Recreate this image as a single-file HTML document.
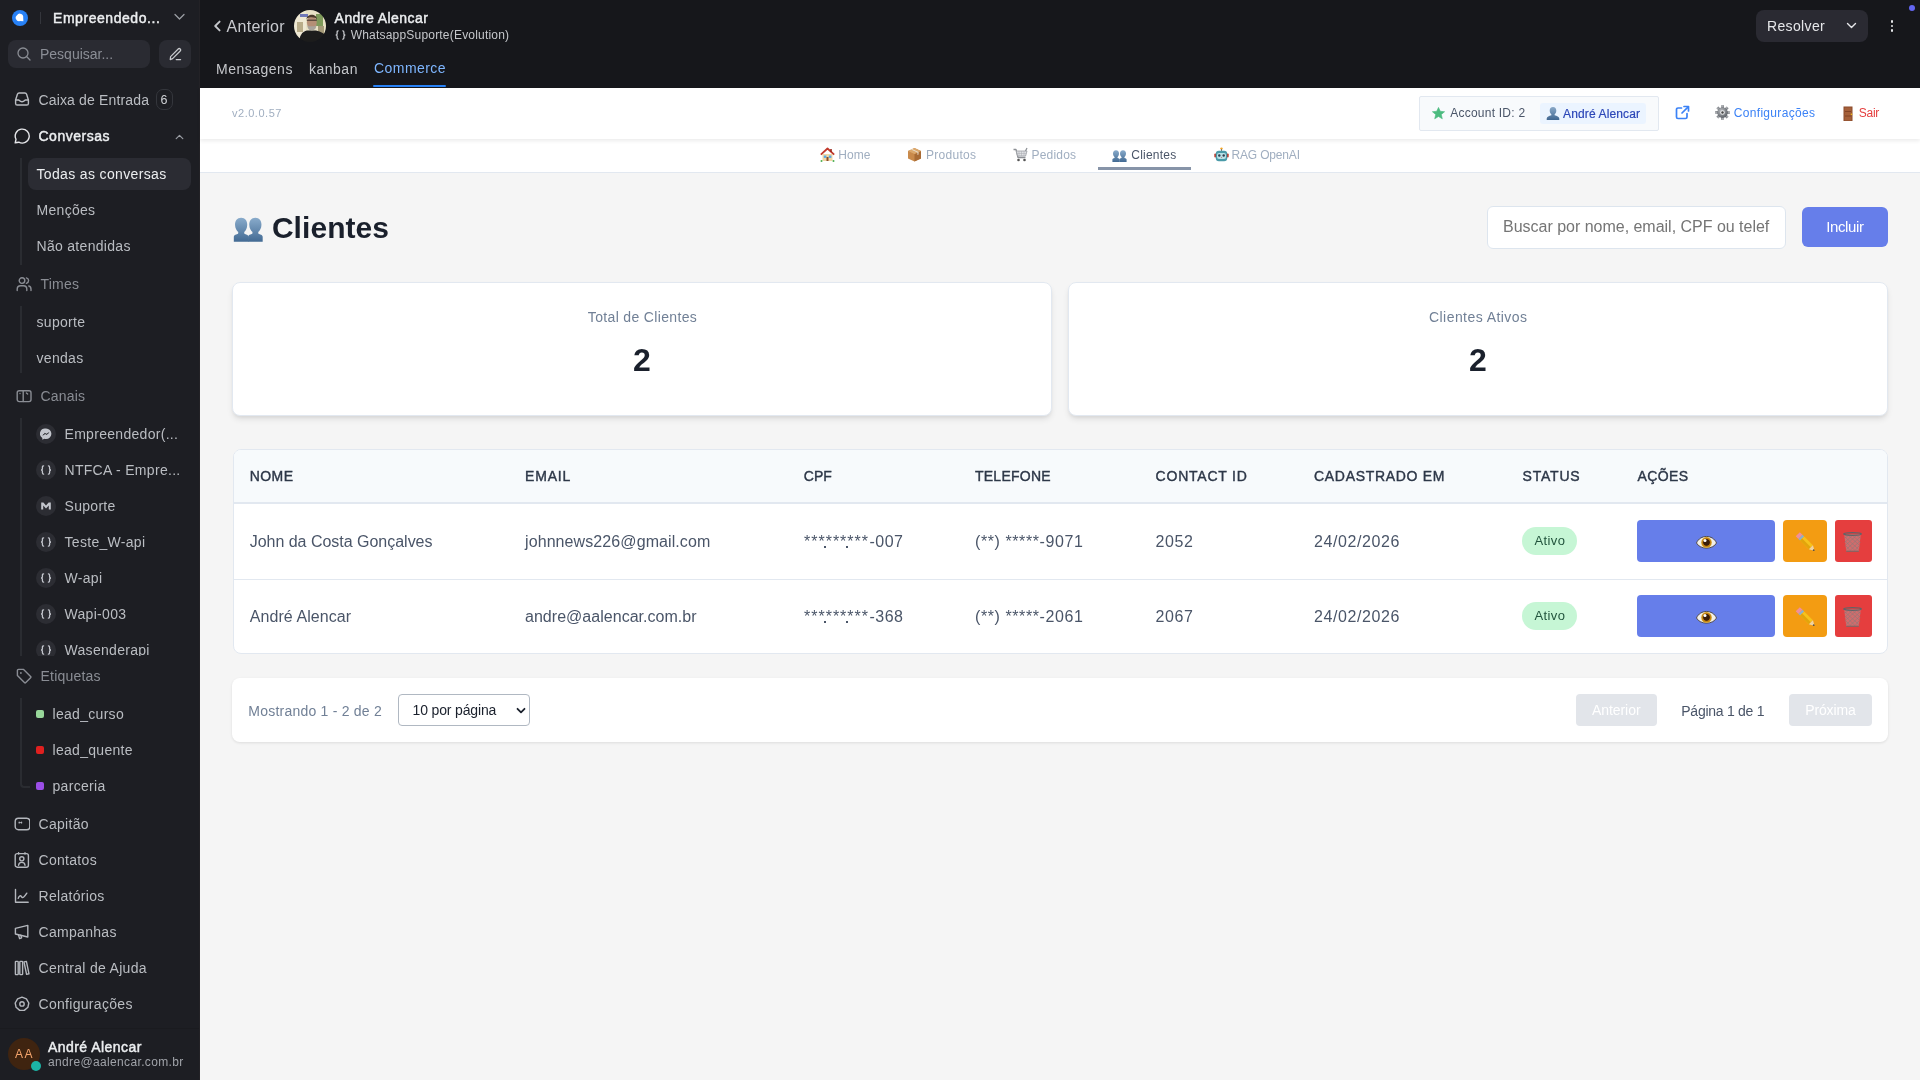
<!DOCTYPE html>
<html><head><meta charset="utf-8">
<style>
*{box-sizing:border-box;margin:0;padding:0}
html,body{width:1920px;height:1080px;overflow:hidden;font-family:"Liberation Sans",sans-serif;background:#f4f4f5;position:relative}
.abs{position:absolute}
.t{position:absolute;white-space:nowrap;line-height:1}
</style></head><body><div style="position:absolute;left:0;top:0;width:1920px;height:1080px;overflow:hidden;will-change:transform">

<div class="abs" style="left:0;top:0;width:200px;height:1080px;background:#1d1e23;border-right:1px solid #232226"></div>
<div class="abs" style="left:12px;top:10px;width:16px;height:16px;border-radius:50%;background:#2781f6"></div>
<svg class="abs" style="left:12px;top:10px;" width="16" height="16" viewBox="0 0 16 16" fill="none"><path d="M5 5.2 A3.4 3.4 0 0 1 11.2 7.6 L11.4 11.2 L7.9 11 A3.3 3.3 0 0 1 5 5.2Z" fill="#fff"/></svg>
<div class="abs" style="left:40px;top:12px;width:1px;height:12px;background:#34363c;"></div>
<div class="t" style="left:53px;top:11.16px;font-size:14px;color:#eceef0;font-weight:400;letter-spacing:0.55px;-webkit-text-stroke:0.45px #eceef0">Empreendedo...</div>
<svg class="abs" style="left:174px;top:13px;" width="11" height="8" viewBox="0 0 11 8" fill="none"><path d="M1 1.5 L5.5 6 L10 1.5" stroke="#9a9da3" stroke-width="1.3" stroke-linecap="round" stroke-linejoin="round"/></svg>
<div class="abs" style="left:8px;top:40px;width:142px;height:28px;border-radius:8px;background:#2a2b32"></div>
<svg class="abs" style="left:17px;top:47px;" width="14" height="14" viewBox="0 0 14 14" fill="none"><circle cx="6" cy="6" r="5" stroke="#8a8d94" stroke-width="1.3"/><path d="M9.8 9.8 L13 13" stroke="#8a8d94" stroke-width="1.3" stroke-linecap="round"/></svg>
<div class="t" style="left:40px;top:46.95px;font-size:14px;color:#8b8e96;font-weight:400;letter-spacing:0px;">Pesquisar...</div>
<div class="abs" style="left:159px;top:40px;width:32px;height:28px;border-radius:8px;background:#2a2b32"></div>
<svg class="abs" style="left:168px;top:47px;" width="14" height="14" viewBox="0 0 14 14" fill="none"><path d="M2.2 12.6 L2.6 9.6 L10.2 2 A1.4 1.4 0 0 1 12.2 4 L4.6 11.6 Z" stroke="#c9cbcf" stroke-width="1.2" stroke-linejoin="round"/><path d="M8.2 12.6 H12.6" stroke="#c9cbcf" stroke-width="1.2" stroke-linecap="round"/></svg>
<svg class="abs" style="left:14px;top:91px" width="16" height="16" viewBox="0 0 16 16" fill="none" stroke="#babdc2" stroke-width="1.4" stroke-linecap="round" stroke-linejoin="round"><path d="M1.6 9 L3.4 3.2 C3.7 2.4 4.3 2 5.1 2 H10.9 C11.7 2 12.3 2.4 12.6 3.2 L14.4 9 V12.4 C14.4 13.4 13.8 14 12.8 14 H3.2 C2.2 14 1.6 13.4 1.6 12.4 Z"/><path d="M1.6 9 H4.6 C5.4 9 5.6 10.8 8 10.8 C10.4 10.8 10.6 9 11.4 9 H14.4"/></svg>
<div class="t" style="left:38.5px;top:93.36px;font-size:14px;color:#babdc2;font-weight:400;letter-spacing:0.15px;">Caixa de Entrada</div>
<div class="abs" style="left:155.5px;top:89px;width:17px;height:21px;border-radius:7px;border:1px solid #34363c"></div>
<div class="t" style="left:160.5px;top:93.53px;font-size:12.5px;color:#d0d2d6;font-weight:400;letter-spacing:0px;">6</div>
<svg class="abs" style="left:13.8px;top:127.6px" width="16" height="16" viewBox="0 0 16 16" fill="none" stroke="#e6e7ea" stroke-width="1.4" stroke-linecap="round" stroke-linejoin="round"><path d="M4.8 14.2 A7 7 0 1 0 2 11.3 L1.2 14.8 Z"/></svg>
<div class="t" style="left:38.5px;top:129.35px;font-size:14px;color:#eceef0;font-weight:400;letter-spacing:0.5px;-webkit-text-stroke:0.45px #eceef0">Conversas</div>
<svg class="abs" style="left:174.5px;top:133.5px;" width="9" height="6" viewBox="0 0 9 6" fill="none"><path d="M1.2 4.6 L4.5 1.3 L7.8 4.6" stroke="#9a9da3" stroke-width="1.2" stroke-linecap="round" stroke-linejoin="round"/></svg>
<div class="abs" style="left:20px;top:158px;width:2px;height:107px;background:#2a2c31;"></div>
<div class="abs" style="left:28px;top:158px;width:163px;height:32px;border-radius:8px;background:#2b2c33"></div>
<div class="t" style="left:36.5px;top:167.35px;font-size:14px;color:#eceef0;font-weight:400;letter-spacing:0.35px;">Todas as conversas</div>
<div class="t" style="left:36.5px;top:203.35px;font-size:14px;color:#babdc2;font-weight:400;letter-spacing:0.3px;">Menções</div>
<div class="t" style="left:36.5px;top:239.35px;font-size:14px;color:#babdc2;font-weight:400;letter-spacing:0.3px;">Não atendidas</div>
<svg class="abs" style="left:16px;top:276px" width="16" height="16" viewBox="0 0 16 16" fill="none" stroke="#8a8d94" stroke-width="1.4" stroke-linecap="round" stroke-linejoin="round"><circle cx="6" cy="4.6" r="2.8"/><path d="M1.2 14.6 V13.2 C1.2 11 2.8 9.8 4.6 9.8 H7.4 C9.2 9.8 10.8 11 10.8 13.2 V14.6"/><path d="M10.4 1.9 C11.8 2.3 12.6 3.4 12.6 4.6 C12.6 5.8 11.8 6.9 10.4 7.3"/><path d="M12.8 10 C14.2 10.4 15 11.6 15 13.2 V14.6"/></svg>
<div class="t" style="left:40.5px;top:277.06px;font-size:14px;color:#8a8d94;font-weight:400;letter-spacing:0.2px;">Times</div>
<div class="abs" style="left:20px;top:306px;width:2px;height:67px;background:#2a2c31;"></div>
<div class="t" style="left:36.5px;top:315.36px;font-size:14px;color:#babdc2;font-weight:400;letter-spacing:0.3px;">suporte</div>
<div class="t" style="left:36.5px;top:351.36px;font-size:14px;color:#babdc2;font-weight:400;letter-spacing:0.3px;">vendas</div>
<svg class="abs" style="left:16px;top:389px" width="16" height="16" viewBox="0 0 16 16" fill="none" stroke="#8a8d94" stroke-width="1.4" stroke-linecap="round" stroke-linejoin="round"><rect x="1.2" y="1.8" width="13.8" height="10.8" rx="2"/><path d="M7.2 1.8 V12.6"/><path d="M4 4.4 V4.6"/><path d="M10.4 4 L11.6 5"/></svg>
<div class="t" style="left:40.5px;top:389.36px;font-size:14px;color:#8a8d94;font-weight:400;letter-spacing:0.2px;">Canais</div>
<div class="abs" style="left:20px;top:418px;width:2px;height:238px;background:#2a2c31;"></div>
<div class="abs" style="left:0;top:418px;width:200px;height:238px;overflow:hidden">
<div class="abs" style="left:36px;top:5.8px;width:20px;height:20px;border-radius:50%;background:#2c2d33"></div>
<svg class="abs" style="left:40px;top:9.8px" width="12" height="12" viewBox="0 0 12 12"><path d="M6 0.6 A5.4 5.2 0 0 1 6 11 A5.8 5.8 0 0 1 4.3 10.8 L2.4 11.8 L2.3 9.9 A5.1 5.1 0 0 1 6 0.6Z" fill="#c3c6cd"/><path d="M2.8 7.2 L4.8 5.3 L6.2 6.3 L8.8 4.6 L6.9 6.6 L5.5 5.6Z" fill="#2c2d33" stroke="#2c2d33" stroke-width="0.6"/></svg>
<div class="t" style="left:64.5px;top:9.16px;font-size:14px;color:#babdc2;letter-spacing:0.3px">Empreendedor(...</div>
<div class="abs" style="left:36px;top:41.8px;width:20px;height:20px;border-radius:50%;background:#2c2d33"></div>
<svg class="abs" style="left:40px;top:46.8px" width="12" height="10" viewBox="0 0 12 10" fill="none" stroke="#c3c6cd" stroke-width="1.3" stroke-linecap="round"><path d="M3.6 0.8 C2.6 0.8 2.4 1.3 2.4 2.4 V3.7 C2.4 4.5 2 5 1 5 C2 5 2.4 5.5 2.4 6.3 V7.6 C2.4 8.7 2.6 9.2 3.6 9.2"/><path d="M8.4 0.8 C9.4 0.8 9.6 1.3 9.6 2.4 V3.7 C9.6 4.5 10 5 11 5 C10 5 9.6 5.5 9.6 6.3 V7.6 C9.6 8.7 9.4 9.2 8.4 9.2"/></svg>
<div class="t" style="left:64.5px;top:45.16px;font-size:14px;color:#babdc2;letter-spacing:0.3px">NTFCA - Empre...</div>
<div class="abs" style="left:36px;top:77.8px;width:20px;height:20px;border-radius:50%;background:#2c2d33"></div>
<svg class="abs" style="left:40px;top:81.8px" width="12" height="12" viewBox="0 0 12 12"><path d="M1.2 2.5 H3.4 L6 5.6 L8.6 2.5 H10.8 V9.5 H8.8 V5.6 L6 8.6 L3.2 5.6 V9.5 H1.2Z" fill="#c3c6cd"/></svg>
<div class="t" style="left:64.5px;top:81.16px;font-size:14px;color:#babdc2;letter-spacing:0.3px">Suporte</div>
<div class="abs" style="left:36px;top:113.8px;width:20px;height:20px;border-radius:50%;background:#2c2d33"></div>
<svg class="abs" style="left:40px;top:118.8px" width="12" height="10" viewBox="0 0 12 10" fill="none" stroke="#c3c6cd" stroke-width="1.3" stroke-linecap="round"><path d="M3.6 0.8 C2.6 0.8 2.4 1.3 2.4 2.4 V3.7 C2.4 4.5 2 5 1 5 C2 5 2.4 5.5 2.4 6.3 V7.6 C2.4 8.7 2.6 9.2 3.6 9.2"/><path d="M8.4 0.8 C9.4 0.8 9.6 1.3 9.6 2.4 V3.7 C9.6 4.5 10 5 11 5 C10 5 9.6 5.5 9.6 6.3 V7.6 C9.6 8.7 9.4 9.2 8.4 9.2"/></svg>
<div class="t" style="left:64.5px;top:117.15px;font-size:14px;color:#babdc2;letter-spacing:0.3px">Teste_W-api</div>
<div class="abs" style="left:36px;top:149.8px;width:20px;height:20px;border-radius:50%;background:#2c2d33"></div>
<svg class="abs" style="left:40px;top:154.8px" width="12" height="10" viewBox="0 0 12 10" fill="none" stroke="#c3c6cd" stroke-width="1.3" stroke-linecap="round"><path d="M3.6 0.8 C2.6 0.8 2.4 1.3 2.4 2.4 V3.7 C2.4 4.5 2 5 1 5 C2 5 2.4 5.5 2.4 6.3 V7.6 C2.4 8.7 2.6 9.2 3.6 9.2"/><path d="M8.4 0.8 C9.4 0.8 9.6 1.3 9.6 2.4 V3.7 C9.6 4.5 10 5 11 5 C10 5 9.6 5.5 9.6 6.3 V7.6 C9.6 8.7 9.4 9.2 8.4 9.2"/></svg>
<div class="t" style="left:64.5px;top:153.15px;font-size:14px;color:#babdc2;letter-spacing:0.3px">W-api</div>
<div class="abs" style="left:36px;top:185.8px;width:20px;height:20px;border-radius:50%;background:#2c2d33"></div>
<svg class="abs" style="left:40px;top:190.8px" width="12" height="10" viewBox="0 0 12 10" fill="none" stroke="#c3c6cd" stroke-width="1.3" stroke-linecap="round"><path d="M3.6 0.8 C2.6 0.8 2.4 1.3 2.4 2.4 V3.7 C2.4 4.5 2 5 1 5 C2 5 2.4 5.5 2.4 6.3 V7.6 C2.4 8.7 2.6 9.2 3.6 9.2"/><path d="M8.4 0.8 C9.4 0.8 9.6 1.3 9.6 2.4 V3.7 C9.6 4.5 10 5 11 5 C10 5 9.6 5.5 9.6 6.3 V7.6 C9.6 8.7 9.4 9.2 8.4 9.2"/></svg>
<div class="t" style="left:64.5px;top:189.15px;font-size:14px;color:#babdc2;letter-spacing:0.3px">Wapi-003</div>
<div class="abs" style="left:36px;top:221.8px;width:20px;height:20px;border-radius:50%;background:#2c2d33"></div>
<svg class="abs" style="left:40px;top:226.8px" width="12" height="10" viewBox="0 0 12 10" fill="none" stroke="#c3c6cd" stroke-width="1.3" stroke-linecap="round"><path d="M3.6 0.8 C2.6 0.8 2.4 1.3 2.4 2.4 V3.7 C2.4 4.5 2 5 1 5 C2 5 2.4 5.5 2.4 6.3 V7.6 C2.4 8.7 2.6 9.2 3.6 9.2"/><path d="M8.4 0.8 C9.4 0.8 9.6 1.3 9.6 2.4 V3.7 C9.6 4.5 10 5 11 5 C10 5 9.6 5.5 9.6 6.3 V7.6 C9.6 8.7 9.4 9.2 8.4 9.2"/></svg>
<div class="t" style="left:64.5px;top:225.15px;font-size:14px;color:#babdc2;letter-spacing:0.3px">Wasenderapi</div>
</div>
<svg class="abs" style="left:16px;top:668px" width="16" height="16" viewBox="0 0 16 16" fill="none" stroke="#8a8d94" stroke-width="1.4" stroke-linecap="round" stroke-linejoin="round"><path d="M1.4 2.6 C1.4 1.9 1.9 1.4 2.6 1.4 H7.6 L14.6 8.4 C15 8.8 15 9.4 14.6 9.8 L9.8 14.6 C9.4 15 8.8 15 8.4 14.6 L1.4 7.6 Z"/><path d="M4.9 4.9 V5" stroke-width="1.8"/></svg>
<div class="t" style="left:40.5px;top:669.06px;font-size:14px;color:#8a8d94;font-weight:400;letter-spacing:0.2px;">Etiquetas</div>
<div class="abs" style="left:20px;top:698px;width:10px;height:90px;border-left:2px solid #2a2c31;border-bottom:2px solid #2a2c31;border-bottom-left-radius:4px"></div>
<div class="abs" style="left:36px;top:710px;width:8px;height:8px;background:#98d79a;border-radius:2px"></div>
<div class="t" style="left:52.5px;top:707.36px;font-size:14px;color:#babdc2;font-weight:400;letter-spacing:0.3px;">lead_curso</div>
<div class="abs" style="left:36px;top:746px;width:8px;height:8px;background:#e0201f;border-radius:2px"></div>
<div class="t" style="left:52.5px;top:743.36px;font-size:14px;color:#babdc2;font-weight:400;letter-spacing:0.3px;">lead_quente</div>
<div class="abs" style="left:36px;top:782px;width:8px;height:8px;background:#9b4ee6;border-radius:2px"></div>
<div class="t" style="left:52.5px;top:779.36px;font-size:14px;color:#babdc2;font-weight:400;letter-spacing:0.3px;">parceria</div>
<svg class="abs" style="left:13.5px;top:816px" width="16" height="16" viewBox="0 0 16 16" fill="none" stroke="#b4b7bd" stroke-width="1.4" stroke-linecap="round" stroke-linejoin="round"><rect x="1.2" y="2.2" width="14.6" height="11.6" rx="3.2"/><path d="M5.2 6.2 V6.9 M7.6 6.2 V6.9" stroke-width="1.2"/><path d="M5.2 6.6 H7.6" stroke-width="0.9"/></svg>
<svg class="abs" style="left:14px;top:852px" width="16" height="16" viewBox="0 0 16 16" fill="none" stroke="#b4b7bd" stroke-width="1.4" stroke-linecap="round" stroke-linejoin="round"><rect x="1.2" y="1.6" width="13.2" height="13.6" rx="2"/><path d="M4.6 0.8 V2 M11 0.8 V2"/><circle cx="7.8" cy="6.8" r="2.1"/><path d="M4.6 13.2 C4.8 11.2 6 10.4 7.8 10.4 C9.6 10.4 10.8 11.2 11 13.2"/></svg>
<svg class="abs" style="left:14px;top:888px" width="16" height="16" viewBox="0 0 16 16" fill="none" stroke="#b4b7bd" stroke-width="1.4" stroke-linecap="round" stroke-linejoin="round"><path d="M1.5 1.5 V14.2 H14.2"/><path d="M4.2 10.4 C5.2 7.2 6.6 7.2 7.6 8.8 C8.6 10.4 10 9.6 12.8 5.2"/></svg>
<svg class="abs" style="left:14px;top:924px" width="16" height="16" viewBox="0 0 16 16" fill="none" stroke="#b4b7bd" stroke-width="1.4" stroke-linecap="round" stroke-linejoin="round"><path d="M1.4 4.4 L13.8 1.4 V13 L1.4 10 Z"/><path d="M4.4 10.6 L5.6 14.6 L7.6 13.8 L6.8 11.2"/></svg>
<svg class="abs" style="left:14px;top:960px" width="16" height="16" viewBox="0 0 16 16" fill="none" stroke="#b4b7bd" stroke-width="1.4" stroke-linecap="round" stroke-linejoin="round"><rect x="1.4" y="1.4" width="2.8" height="13.2" rx="0.6"/><rect x="5.8" y="1.4" width="2.8" height="13.2" rx="0.6"/><path d="M10 2 L12.4 1.4 L15 13.8 L12.6 14.4 Z"/></svg>
<svg class="abs" style="left:14px;top:996px" width="16" height="16" viewBox="0 0 16 16" fill="none" stroke="#b4b7bd" stroke-width="1.4" stroke-linecap="round" stroke-linejoin="round"><path d="M8 1.2 L12.4 2.9 L14.8 7 L13.9 11.3 L10.3 14.4 H5.7 L2.1 11.3 L1.2 7 L3.6 2.9 Z"/><circle cx="8" cy="7.9" r="2.2"/></svg>
<div class="t" style="left:38.5px;top:816.86px;font-size:14px;color:#babdc2;font-weight:400;letter-spacing:0.3px;">Capitão</div>
<div class="t" style="left:38.5px;top:852.86px;font-size:14px;color:#babdc2;font-weight:400;letter-spacing:0.3px;">Contatos</div>
<div class="t" style="left:38.5px;top:888.86px;font-size:14px;color:#babdc2;font-weight:400;letter-spacing:0.3px;">Relatórios</div>
<div class="t" style="left:38.5px;top:924.86px;font-size:14px;color:#babdc2;font-weight:400;letter-spacing:0.3px;">Campanhas</div>
<div class="t" style="left:38.5px;top:960.86px;font-size:14px;color:#babdc2;font-weight:400;letter-spacing:0.3px;">Central de Ajuda</div>
<div class="t" style="left:38.5px;top:996.86px;font-size:14px;color:#babdc2;font-weight:400;letter-spacing:0.3px;">Configurações</div>
<div class="abs" style="left:0px;top:1028px;width:199px;height:1px;background:#1a1b1f;"></div>
<div class="abs" style="left:8px;top:1038px;width:32px;height:32px;border-radius:50%;background:#3f2410"></div>
<div class="t" style="left:15px;top:1047.89px;font-size:12px;color:#f4a46c;font-weight:400;letter-spacing:1.4px;">AA</div>
<div class="abs" style="left:30.5px;top:1060.5px;width:10px;height:10px;border-radius:50%;background:#1cb5a5"></div>
<div class="t" style="left:48px;top:1039.76px;font-size:14px;color:#eceef0;font-weight:400;letter-spacing:0.45px;-webkit-text-stroke:0.45px #eceef0">André Alencar</div>
<div class="t" style="left:48px;top:1056.09px;font-size:12px;color:#a0a3a9;font-weight:400;letter-spacing:0.35px;">andre@aalencar.com.br</div>
<div class="abs" style="left:200px;top:0;width:1720px;height:88px;background:#16171b"></div>
<svg class="abs" style="left:213px;top:20px;" width="9" height="12" viewBox="0 0 9 12" fill="none"><path d="M6.6 1.6 L2.2 6 L6.6 10.4" stroke="#c5c7cb" stroke-width="1.9" stroke-linecap="round" stroke-linejoin="round"/></svg>
<div class="t" style="left:226.5px;top:18.92px;font-size:16px;color:#c8cacf;font-weight:400;letter-spacing:0.3px;">Anterior</div>
<svg class="abs" style="left:294px;top:9.8px;" width="32" height="32" viewBox="0 0 32 32" fill="none"><defs><clipPath id="av"><circle cx="16" cy="16" r="16"/></clipPath>
<filter id="blr" x="-10%" y="-10%" width="120%" height="120%"><feGaussianBlur stdDeviation="0.7"/></filter></defs>
<g clip-path="url(#av)"><g filter="url(#blr)"><rect width="32" height="32" fill="#e9e2c6"/>
<rect x="0" y="0" width="12" height="32" fill="#efe9d4"/>
<rect x="6" y="4" width="8" height="3" fill="#6f78b8"/>
<rect x="3" y="12" width="6" height="10" fill="#b9ad8a"/>
<rect x="22" y="4" width="7" height="12" fill="#7e9a5a"/>
<rect x="24" y="16" width="6" height="10" fill="#a59a78"/>
<path d="M5 34 C5 26 8 21.5 13 20.5 L22 20.5 C27 21.5 31 24 33 27 V34Z" fill="#1c1c1f"/>
<ellipse cx="17.8" cy="12.4" rx="4.9" ry="6.6" fill="#b58f76"/>
<path d="M12.6 9.2 C12.4 3.6 22.8 2.6 23 9.4 C21.8 6.6 14 6.4 12.6 9.2Z" fill="#4b3a2c"/>
<path d="M13.2 15 C13.6 19.5 16 20.4 17.8 20.4 C19.8 20.4 22.2 19.4 22.4 15 C21 17 19.5 16.2 17.8 16.2 C16 16.2 14.6 17 13.2 15Z" fill="#a9a49c"/>
<path d="M12.8 10.2 H22.8" stroke="#3a302a" stroke-width="1"/>
</g></g></svg>
<div class="t" style="left:334.6px;top:11.36px;font-size:14px;color:#eceef0;font-weight:400;letter-spacing:0.45px;-webkit-text-stroke:0.45px #eceef0">Andre Alencar</div>
<svg class="abs" style="left:334.5px;top:30px" width="11" height="10" viewBox="0 0 11 10" fill="none" stroke="#c5c7cb" stroke-width="1.3" stroke-linecap="round"><path d="M3.2 0.8 C2.3 0.8 2.1 1.3 2.1 2.4 V3.7 C2.1 4.5 1.7 5 0.7 5 C1.7 5 2.1 5.5 2.1 6.3 V7.6 C2.1 8.7 2.3 9.2 3.2 9.2"/><path d="M7.8 0.8 C8.7 0.8 8.9 1.3 8.9 2.4 V3.7 C8.9 4.5 9.3 5 10.3 5 C9.3 5 8.9 5.5 8.9 6.3 V7.6 C8.9 8.7 8.7 9.2 7.8 9.2"/></svg>
<div class="t" style="left:350.7px;top:28.79px;font-size:12px;color:#c5c7cb;font-weight:400;letter-spacing:0.2px;">WhatsappSuporte(Evolution)</div>
<div class="t" style="left:216px;top:61.65px;font-size:14px;color:#c5c7cb;font-weight:400;letter-spacing:0.5px;">Mensagens</div>
<div class="t" style="left:309px;top:61.65px;font-size:14px;color:#c5c7cb;font-weight:400;letter-spacing:0.5px;">kanban</div>
<div class="t" style="left:374px;top:60.85px;font-size:14px;color:#7eb6ff;font-weight:400;letter-spacing:0.45px;">Commerce</div>
<div class="abs" style="left:373px;top:85px;width:73px;height:2px;background:#2781f6;border-radius:1px"></div>
<div class="abs" style="left:1756px;top:10px;width:112px;height:32px;border-radius:8px;background:#2a2a32"></div>
<div class="t" style="left:1767px;top:18.96px;font-size:14px;color:#e6e7ea;font-weight:400;letter-spacing:0.35px;">Resolver</div>
<svg class="abs" style="left:1846px;top:22px;" width="11" height="8" viewBox="0 0 11 8" fill="none"><path d="M1.5 1.5 L5.5 5.5 L9.5 1.5" stroke="#e6e7ea" stroke-width="1.4" stroke-linecap="round" stroke-linejoin="round"/></svg>
<div class="abs" style="left:1890.5px;top:20px;width:2.6px;height:2.6px;border-radius:50%;background:#e6e7ea"></div>
<div class="abs" style="left:1890.5px;top:24.5px;width:2.6px;height:2.6px;border-radius:50%;background:#e6e7ea"></div>
<div class="abs" style="left:1890.5px;top:29px;width:2.6px;height:2.6px;border-radius:50%;background:#e6e7ea"></div>
<div class="abs" style="left:1909px;top:5px;width:6px;height:6px;border-radius:50%;background:#6366f1"></div>
<div class="abs" style="left:200px;top:88px;width:1720px;height:992px;background:#f5f5f5"></div>
<div class="abs" style="left:200px;top:88px;width:1720px;height:51px;background:#fff;box-shadow:0 2px 4px rgba(0,0,0,0.08);z-index:2"></div>
<div class="abs" style="left:200px;top:139px;width:1720px;height:34px;background:#fff;border-bottom:1px solid #e2e8f0"></div>
<div style="position:absolute;left:0;top:0;width:1920px;height:1080px;z-index:3">
<div class="t" style="left:232px;top:107.91px;font-size:11px;color:#a0aec0;font-weight:400;letter-spacing:0.518px;">v2.0.0.57</div>
<div class="abs" style="left:1419px;top:96px;width:240px;height:35px;background:#f8fafc;border:1px solid #e2e8f0;border-radius:2px"></div>
<svg class="abs" style="left:1431.5px;top:106.8px;" width="13" height="13" viewBox="0 0 13 13" fill="none"><path d="M6.5 0.4 L8.3 4.3 L12.6 4.7 L9.3 7.5 L10.3 11.8 L6.5 9.5 L2.7 11.8 L3.7 7.5 L0.4 4.7 L4.7 4.3Z" fill="#4cbb7f" stroke="#4cbb7f" stroke-width="0.6" stroke-linejoin="round"/></svg>
<div class="t" style="left:1450.2px;top:106.59px;font-size:12px;color:#4a5568;font-weight:400;letter-spacing:0.239px;">Account ID: 2</div>
<div class="abs" style="left:1540px;top:103px;width:106px;height:21px;background:#ebf4ff;border-radius:3px"></div>
<svg class="abs" style="left:1546px;top:106px;" width="14" height="14" viewBox="0 0 14 14" fill="none"><defs><linearGradient id="bu" x1="0" y1="0" x2="0" y2="1"><stop offset="0" stop-color="#8aa9c8"/><stop offset="1" stop-color="#3f6690"/></linearGradient></defs><path d="M7 1 C9.2 1 10.3 2.6 10.3 4.6 C10.3 6.6 9.3 8 8.6 8.5 L8.6 9.3 C11 9.8 13 10.8 13.3 12.5 L13.3 14 H0.7 V12.5 C1 10.8 3 9.8 5.4 9.3 L5.4 8.5 C4.7 8 3.7 6.6 3.7 4.6 C3.7 2.6 4.8 1 7 1Z" fill="url(#bu)"/></svg>
<div class="t" style="left:1563px;top:107.59px;font-size:12px;color:#2c47b8;font-weight:400;letter-spacing:0.135px;-webkit-text-stroke:0.2px #2c47b8">André Alencar</div>
<svg class="abs" style="left:1675px;top:104.5px;" width="15" height="15" viewBox="0 0 15 15" fill="none"><path d="M6.5 3 H3 A1.5 1.5 0 0 0 1.5 4.5 V12 A1.5 1.5 0 0 0 3 13.5 H10.5 A1.5 1.5 0 0 0 12 12 V8.5" stroke="#3b82f6" stroke-width="1.7" stroke-linecap="round"/><path d="M9 1.5 H13.5 V6" stroke="#3b82f6" stroke-width="1.7" stroke-linecap="round" stroke-linejoin="round"/><path d="M13.2 1.8 L7 8" stroke="#3b82f6" stroke-width="1.7" stroke-linecap="round"/></svg>
<svg class="abs" style="left:1715px;top:105px;" width="15" height="15" viewBox="0 0 15 15" fill="none"><defs><radialGradient id="gr" cx="0.4" cy="0.35" r="0.7"><stop offset="0" stop-color="#b9bcc0"/><stop offset="1" stop-color="#5c6066"/></radialGradient></defs><g transform="translate(7.5 7.5)"><g fill="url(#gr)"><rect x="-1.3" y="-7.3" width="2.6" height="3" transform="rotate(0)"/><rect x="-1.3" y="-7.3" width="2.6" height="3" transform="rotate(45)"/><rect x="-1.3" y="-7.3" width="2.6" height="3" transform="rotate(90)"/><rect x="-1.3" y="-7.3" width="2.6" height="3" transform="rotate(135)"/><rect x="-1.3" y="-7.3" width="2.6" height="3" transform="rotate(180)"/><rect x="-1.3" y="-7.3" width="2.6" height="3" transform="rotate(225)"/><rect x="-1.3" y="-7.3" width="2.6" height="3" transform="rotate(270)"/><rect x="-1.3" y="-7.3" width="2.6" height="3" transform="rotate(315)"/><circle r="5.2"/></g><circle r="2.3" fill="#e8e9ea"/><circle r="1.2" fill="#444"/></g></svg>
<div class="t" style="left:1733.75px;top:106.84px;font-size:12px;color:#3b82f6;font-weight:400;letter-spacing:0.322px;">Configurações</div>
<svg class="abs" style="left:1843px;top:106px;" width="10" height="15" viewBox="0 0 10 15" fill="none"><rect x="0.5" y="0.5" width="9" height="14.5" fill="#8b4a2b"/><rect x="1.5" y="1.5" width="7" height="13" fill="#a5603a"/><path d="M2 5.5 H8 M2 10 H8" stroke="#7a3e22" stroke-width="0.8"/><circle cx="8.5" cy="8.2" r="0.8" fill="#f5c518"/></svg>
<div class="t" style="left:1858.75px;top:107.09px;font-size:12px;color:#e53e3e;font-weight:400;letter-spacing:-0.247px;">Sair</div>
<svg class="abs" style="left:820px;top:147px;" width="15" height="15" viewBox="0 0 15 15" fill="none"><path d="M2.5 7 V14 H12.5 V7" fill="#f2d8a6"/><path d="M0.8 7.6 L7.5 1.5 L14.2 7.6" stroke="#c1392b" stroke-width="1.8" fill="none" stroke-linejoin="round"/><rect x="10.2" y="2" width="1.6" height="3" fill="#9b2a1f"/><rect x="3.8" y="8.5" width="2.6" height="2.4" fill="#5aa9e6"/><rect x="8.8" y="8.5" width="2.6" height="2.4" fill="#5aa9e6"/><rect x="6.5" y="10" width="2" height="4" fill="#8a4b2a"/><circle cx="1.5" cy="14" r="1" fill="#4caf50"/><circle cx="13.5" cy="14" r="1" fill="#4caf50"/></svg>
<div class="t" style="left:838.3px;top:148.79px;font-size:12px;color:#a0aec0;font-weight:400;letter-spacing:0.03px;">Home</div>
<svg class="abs" style="left:907px;top:147px;" width="15" height="15" viewBox="0 0 15 15" fill="none"><path d="M7.5 1 L14 4 V11.5 L7.5 14.5 L1 11.5 V4Z" fill="#c98a4b"/><path d="M7.5 7 L14 4 V11.5 L7.5 14.5Z" fill="#a86b35"/><path d="M1 4 L7.5 7 L14 4 L7.5 1Z" fill="#dba86c"/><path d="M4 2.5 L10.5 5.5 L10.5 8 L11.5 7.5 L11.5 5 L5 2Z" fill="#e9dfd0"/></svg>
<div class="t" style="left:926px;top:148.79px;font-size:12px;color:#a0aec0;font-weight:400;letter-spacing:0.281px;">Produtos</div>
<svg class="abs" style="left:1013px;top:147px;" width="15" height="15" viewBox="0 0 15 15" fill="none"><path d="M0.5 2.5 H3 L5 10.5 H12.5" stroke="#8c8f94" stroke-width="1.3" fill="none" stroke-linejoin="round"/><path d="M3.3 4 H14 L12.6 9 H4.6Z" fill="#dfe1e4" stroke="#9a9da2" stroke-width="0.8"/><path d="M6 4 V9 M8.5 4 V9 M11 4 V9 M4 6.5 H13.3" stroke="#a8abb0" stroke-width="0.5"/><path d="M14 1 L12.5 4" stroke="#8c8f94" stroke-width="1.2"/><circle cx="5.5" cy="13" r="1.3" fill="#555"/><circle cx="11.5" cy="13" r="1.3" fill="#555"/></svg>
<div class="t" style="left:1031.5px;top:148.79px;font-size:12px;color:#a0aec0;font-weight:400;letter-spacing:0.189px;">Pedidos</div>
<svg class="abs" style="left:1112px;top:149.7px;" width="15" height="12" viewBox="0 0 15 12" fill="none"><defs><linearGradient id="bgn" x1="0" y1="0" x2="0" y2="1"><stop offset="0" stop-color="#89abcb"/><stop offset="1" stop-color="#426a93"/></linearGradient></defs><g fill="url(#bgn)"><path d="M4 0.2 C6 0.2 7 1.7 7 3.6 C7 5.3 6.2 6.6 5.5 7.2 L5.6 8 C7 8.4 7.6 8.9 7.6 9.5 V12 H0.4 V9.5 C0.4 8.9 1 8.4 2.5 8 L2.6 7.2 C1.9 6.6 1 5.3 1 3.6 C1 1.7 2 0.2 4 0.2Z"/><path d="M11 0.2 C13 0.2 14 1.7 14 3.6 C14 5.3 13.1 6.6 12.4 7.2 L12.5 8 C14 8.4 14.6 8.9 14.6 9.5 V12 H7.4 V9.5 C7.4 8.9 8 8.4 9.5 8 L9.6 7.2 C8.9 6.6 8 5.3 8 3.6 C8 1.7 9 0.2 11 0.2Z"/></g></svg>
<div class="t" style="left:1131.25px;top:148.69px;font-size:12px;color:#4a5568;font-weight:400;letter-spacing:0.235px;">Clientes</div>
<div class="abs" style="left:1098px;top:167px;width:93px;height:2.6px;background:#8794a8;"></div>
<svg class="abs" style="left:1213.5px;top:147px;" width="15" height="15" viewBox="0 0 15 15" fill="none"><circle cx="7.5" cy="1.6" r="1.2" fill="#f5a623"/><rect x="7" y="2" width="1" height="2" fill="#777"/><rect x="0.3" y="6.5" width="2" height="4" rx="1" fill="#c0392b"/><rect x="12.7" y="6.5" width="2" height="4" rx="1" fill="#c0392b"/><rect x="1.8" y="3.8" width="11.4" height="10.4" rx="3" fill="#4a9aa8"/><rect x="3" y="6" width="9" height="6" rx="2" fill="#b8e0e6"/><circle cx="5.3" cy="8.5" r="1.2" fill="#2c3e50"/><circle cx="9.7" cy="8.5" r="1.2" fill="#2c3e50"/><path d="M7 10 L8 10 L7.5 11Z" fill="#c0392b"/></svg>
<div class="t" style="left:1231.5px;top:148.79px;font-size:12px;color:#a0aec0;font-weight:400;letter-spacing:-0.17px;">RAG OpenAI</div>
<svg class="abs" style="left:233px;top:217.3px;" width="30.5" height="25.3" viewBox="0 0 15 12" fill="none"><defs><linearGradient id="bgt" x1="0" y1="0" x2="0" y2="1"><stop offset="0" stop-color="#89abcb"/><stop offset="1" stop-color="#426a93"/></linearGradient></defs><g fill="url(#bgt)"><path d="M4 0.2 C6 0.2 7 1.7 7 3.6 C7 5.3 6.2 6.6 5.5 7.2 L5.6 8 C7 8.4 7.6 8.9 7.6 9.5 V12 H0.4 V9.5 C0.4 8.9 1 8.4 2.5 8 L2.6 7.2 C1.9 6.6 1 5.3 1 3.6 C1 1.7 2 0.2 4 0.2Z"/><path d="M11 0.2 C13 0.2 14 1.7 14 3.6 C14 5.3 13.1 6.6 12.4 7.2 L12.5 8 C14 8.4 14.6 8.9 14.6 9.5 V12 H7.4 V9.5 C7.4 8.9 8 8.4 9.5 8 L9.6 7.2 C8.9 6.6 8 5.3 8 3.6 C8 1.7 9 0.2 11 0.2Z"/></g></svg>
<div class="t" style="left:271.9px;top:212.88px;font-size:30px;color:#1a202c;font-weight:700;letter-spacing:0.056px;">Clientes</div>
<div class="abs" style="left:1486.5px;top:205.5px;width:299px;height:43px;background:#fff;border:1px solid #dde5ee;border-radius:6px"></div>
<div class="t" style="left:1503px;top:219.12px;font-size:16px;color:#757575;font-weight:400;letter-spacing:-0.014px;">Buscar por nome, email, CPF ou telef</div>
<div class="abs" style="left:1802px;top:207px;width:86px;height:40px;background:#667eea;border-radius:6px"></div>
<div class="t" style="left:1826.2px;top:219.24px;font-size:15px;color:#ffffff;font-weight:400;letter-spacing:-0.369px;">Incluir</div>
<div class="abs" style="left:232px;top:281.5px;width:820px;height:134px;background:#fff;border:1px solid #e2e8f0;border-radius:8px;box-shadow:0 4px 6px -1px rgba(0,0,0,0.1),0 2px 4px -1px rgba(0,0,0,0.06)"></div>
<div class="abs" style="left:1068px;top:281.5px;width:820px;height:134px;background:#fff;border:1px solid #e2e8f0;border-radius:8px;box-shadow:0 4px 6px -1px rgba(0,0,0,0.1),0 2px 4px -1px rgba(0,0,0,0.06)"></div>
<div class="t" style="left:587.8px;top:310.06px;font-size:14px;color:#718096;font-weight:400;letter-spacing:0.343px;">Total de Clientes</div>
<div class="t" style="left:632.9px;top:343.84px;font-size:32px;color:#1a202c;font-weight:700;letter-spacing:0px;">2</div>
<div class="t" style="left:1429px;top:310.06px;font-size:14px;color:#718096;font-weight:400;letter-spacing:0.441px;">Clientes Ativos</div>
<div class="t" style="left:1469px;top:343.84px;font-size:32px;color:#1a202c;font-weight:700;letter-spacing:0px;">2</div>
<div class="abs" style="left:232.5px;top:448.5px;width:1655px;height:205px;background:#fff;border:1px solid #e2e8f0;border-radius:8px;overflow:hidden"><div class="abs" style="left:0;top:0;width:1655px;height:54px;background:#f7fafc;border-bottom:2px solid #e2e8f0"></div><div class="abs" style="left:0;top:129px;width:1655px;height:1px;background:#e2e8f0"></div></div>
<div class="t" style="left:249.7px;top:469.25px;font-size:14px;color:#2d3748;font-weight:400;letter-spacing:0.433px;-webkit-text-stroke:0.4px #2d3748">NOME</div>
<div class="t" style="left:525px;top:469.25px;font-size:14px;color:#2d3748;font-weight:400;letter-spacing:0.821px;-webkit-text-stroke:0.4px #2d3748">EMAIL</div>
<div class="t" style="left:803.75px;top:469.25px;font-size:14px;color:#2d3748;font-weight:400;letter-spacing:0.049px;-webkit-text-stroke:0.4px #2d3748">CPF</div>
<div class="t" style="left:975px;top:469.25px;font-size:14px;color:#2d3748;font-weight:400;letter-spacing:0.242px;-webkit-text-stroke:0.4px #2d3748">TELEFONE</div>
<div class="t" style="left:1155.6px;top:469.25px;font-size:14px;color:#2d3748;font-weight:400;letter-spacing:0.782px;-webkit-text-stroke:0.4px #2d3748">CONTACT ID</div>
<div class="t" style="left:1314px;top:469.25px;font-size:14px;color:#2d3748;font-weight:400;letter-spacing:0.689px;-webkit-text-stroke:0.4px #2d3748">CADASTRADO EM</div>
<div class="t" style="left:1522.5px;top:469.25px;font-size:14px;color:#2d3748;font-weight:400;letter-spacing:0.81px;-webkit-text-stroke:0.4px #2d3748">STATUS</div>
<div class="t" style="left:1637.5px;top:469.25px;font-size:14px;color:#2d3748;font-weight:400;letter-spacing:0.371px;-webkit-text-stroke:0.4px #2d3748">AÇÕES</div>
<div class="t" style="left:249.7px;top:534.02px;font-size:16px;color:#4a5568;font-weight:400;letter-spacing:-0.019px;">John da Costa Gonçalves</div>
<div class="t" style="left:525px;top:534.02px;font-size:16px;color:#4a5568;font-weight:400;letter-spacing:0.092px;">johnnews226@gmail.com</div>
<div class="t" style="left:804px;top:534.02px;font-size:16px;color:#4a5568;font-weight:400;letter-spacing:0.995px;">*********</div>
<div class="abs" style="left:824.3px;top:546.1999999999999px;width:2.2px;height:2.2px;background:#4a5568;"></div>
<div class="abs" style="left:846.2px;top:546.1999999999999px;width:2.2px;height:2.2px;background:#4a5568;"></div>
<div class="t" style="left:869.4px;top:534.02px;font-size:16px;color:#4a5568;font-weight:400;letter-spacing:0.525px;">-007</div>
<div class="t" style="left:975px;top:534.02px;font-size:16px;color:#4a5568;font-weight:400;letter-spacing:0.585px;">(**) *****-9071</div>
<div class="t" style="left:1155.6px;top:534.02px;font-size:16px;color:#4a5568;font-weight:400;letter-spacing:0.535px;">2052</div>
<div class="t" style="left:1314px;top:534.02px;font-size:16px;color:#4a5568;font-weight:400;letter-spacing:0.591px;">24/02/2026</div>
<div class="abs" style="left:1522px;top:527.1px;width:55px;height:27.7px;background:#c6f6d5;border-radius:14px"></div>
<div class="t" style="left:1534.4px;top:534.27px;font-size:13px;color:#22543d;font-weight:400;letter-spacing:0.425px;">Ativo</div>
<div class="abs" style="left:1637px;top:520.2px;width:138px;height:41.7px;background:#667eea;border-radius:4px"></div>
<div class="abs" style="left:1783px;top:520.2px;width:44px;height:41.7px;background:#f39c12;border-radius:4px"></div>
<div class="abs" style="left:1835px;top:520.2px;width:36.5px;height:41.7px;background:#e53e3e;border-radius:3px"></div>
<svg class="abs" style="left:1695.5px;top:533.7px;" width="21" height="16" viewBox="0 0 21 16" fill="none"><defs><radialGradient id="ir0" cx="0.5" cy="0.5" r="0.5"><stop offset="0.55" stop-color="#3b1d08"/><stop offset="0.7" stop-color="#b8760f"/><stop offset="1" stop-color="#d9a21c"/></radialGradient></defs><path d="M0.5 9 C4 0.3 17 0.3 20.5 9 C17 15.8 4 15.8 0.5 9Z" fill="#f2efe9" stroke="#4a4038" stroke-width="0.9"/><circle cx="10.5" cy="8.4" r="5.3" fill="url(#ir0)"/><circle cx="9" cy="6.4" r="1.5" fill="#fff"/></svg>
<svg class="abs" style="left:1790px;top:520.2px;" width="30" height="42" viewBox="0 0 30 42" fill="none"><path d="M9.85 12.15 L12.54 14.84 L8.44 18.94 L5.75 16.25Z" fill="#ef8f9b"/><path d="M12.54 14.84 L14.22 16.52 L10.12 20.62 L8.44 18.94Z" fill="#8fb0c8"/><path d="M14.22 16.52 L22.95 25.25 L18.85 29.35 L10.12 20.62Z" fill="#f6c21c"/><path d="M12.17 18.57 L20.90 27.30 L18.85 29.35 L10.12 20.62Z" fill="#e3a40c"/><path d="M22.95 25.25 L24.60 31.00 L18.85 29.35Z" fill="#f0d2a0"/><path d="M23.99 28.92 L24.60 31.00 L22.52 30.39Z" fill="#2b2b2b"/></svg>
<svg class="abs" style="left:1843px;top:532.2px;" width="20" height="21" viewBox="0 0 20 21" fill="none"><path d="M1.2 2.2 L3.2 19.2 H15.8 L17.8 2.2Z" fill="#b9a3a3" opacity="0.45"/><g stroke="#7d7d7d" stroke-width="0.55" opacity="0.9"><path d="M2 5 L15.8 17.5 M2.6 9.5 L12 18.5 M3.1 14 L7 18.5 M5 3 L17.3 14 M9 3 L17.6 10.5 M13 3 L17.8 6.5"/><path d="M17 5 L3.2 17.5 M16.4 9.5 L7 18.5 M15.9 14 L12 18.5 M14 3 L1.7 14 M10 3 L1.4 10.5 M6 3 L1.2 6.5"/></g><path d="M3.2 19.2 H15.8" stroke="#6b6b6b" stroke-width="1"/><ellipse cx="9.5" cy="2" rx="8.8" ry="1.3" fill="none" stroke="#5f6468" stroke-width="1.3"/></svg>
<div class="t" style="left:249.7px;top:609.02px;font-size:16px;color:#4a5568;font-weight:400;letter-spacing:0.082px;">André Alencar</div>
<div class="t" style="left:525px;top:609.02px;font-size:16px;color:#4a5568;font-weight:400;letter-spacing:0.03px;">andre@aalencar.com.br</div>
<div class="t" style="left:804px;top:609.02px;font-size:16px;color:#4a5568;font-weight:400;letter-spacing:0.995px;">*********</div>
<div class="abs" style="left:824.3px;top:621.1999999999999px;width:2.2px;height:2.2px;background:#4a5568;"></div>
<div class="abs" style="left:846.2px;top:621.1999999999999px;width:2.2px;height:2.2px;background:#4a5568;"></div>
<div class="t" style="left:869.4px;top:609.02px;font-size:16px;color:#4a5568;font-weight:400;letter-spacing:0.525px;">-368</div>
<div class="t" style="left:975px;top:609.02px;font-size:16px;color:#4a5568;font-weight:400;letter-spacing:0.585px;">(**) *****-2061</div>
<div class="t" style="left:1155.6px;top:609.02px;font-size:16px;color:#4a5568;font-weight:400;letter-spacing:0.535px;">2067</div>
<div class="t" style="left:1314px;top:609.02px;font-size:16px;color:#4a5568;font-weight:400;letter-spacing:0.591px;">24/02/2026</div>
<div class="abs" style="left:1522px;top:602.1px;width:55px;height:27.7px;background:#c6f6d5;border-radius:14px"></div>
<div class="t" style="left:1534.4px;top:609.27px;font-size:13px;color:#22543d;font-weight:400;letter-spacing:0.425px;">Ativo</div>
<div class="abs" style="left:1637px;top:595.2px;width:138px;height:41.7px;background:#667eea;border-radius:4px"></div>
<div class="abs" style="left:1783px;top:595.2px;width:44px;height:41.7px;background:#f39c12;border-radius:4px"></div>
<div class="abs" style="left:1835px;top:595.2px;width:36.5px;height:41.7px;background:#e53e3e;border-radius:3px"></div>
<svg class="abs" style="left:1695.5px;top:608.7px;" width="21" height="16" viewBox="0 0 21 16" fill="none"><defs><radialGradient id="ir1" cx="0.5" cy="0.5" r="0.5"><stop offset="0.55" stop-color="#3b1d08"/><stop offset="0.7" stop-color="#b8760f"/><stop offset="1" stop-color="#d9a21c"/></radialGradient></defs><path d="M0.5 9 C4 0.3 17 0.3 20.5 9 C17 15.8 4 15.8 0.5 9Z" fill="#f2efe9" stroke="#4a4038" stroke-width="0.9"/><circle cx="10.5" cy="8.4" r="5.3" fill="url(#ir1)"/><circle cx="9" cy="6.4" r="1.5" fill="#fff"/></svg>
<svg class="abs" style="left:1790px;top:595.2px;" width="30" height="42" viewBox="0 0 30 42" fill="none"><path d="M9.85 12.15 L12.54 14.84 L8.44 18.94 L5.75 16.25Z" fill="#ef8f9b"/><path d="M12.54 14.84 L14.22 16.52 L10.12 20.62 L8.44 18.94Z" fill="#8fb0c8"/><path d="M14.22 16.52 L22.95 25.25 L18.85 29.35 L10.12 20.62Z" fill="#f6c21c"/><path d="M12.17 18.57 L20.90 27.30 L18.85 29.35 L10.12 20.62Z" fill="#e3a40c"/><path d="M22.95 25.25 L24.60 31.00 L18.85 29.35Z" fill="#f0d2a0"/><path d="M23.99 28.92 L24.60 31.00 L22.52 30.39Z" fill="#2b2b2b"/></svg>
<svg class="abs" style="left:1843px;top:607.2px;" width="20" height="21" viewBox="0 0 20 21" fill="none"><path d="M1.2 2.2 L3.2 19.2 H15.8 L17.8 2.2Z" fill="#b9a3a3" opacity="0.45"/><g stroke="#7d7d7d" stroke-width="0.55" opacity="0.9"><path d="M2 5 L15.8 17.5 M2.6 9.5 L12 18.5 M3.1 14 L7 18.5 M5 3 L17.3 14 M9 3 L17.6 10.5 M13 3 L17.8 6.5"/><path d="M17 5 L3.2 17.5 M16.4 9.5 L7 18.5 M15.9 14 L12 18.5 M14 3 L1.7 14 M10 3 L1.4 10.5 M6 3 L1.2 6.5"/></g><path d="M3.2 19.2 H15.8" stroke="#6b6b6b" stroke-width="1"/><ellipse cx="9.5" cy="2" rx="8.8" ry="1.3" fill="none" stroke="#5f6468" stroke-width="1.3"/></svg>
<div class="abs" style="left:232px;top:678px;width:1656px;height:64px;background:#fff;border-radius:8px;box-shadow:0 1px 3px rgba(0,0,0,0.1)"></div>
<div class="t" style="left:248.3px;top:704.15px;font-size:14px;color:#718096;font-weight:400;letter-spacing:0.222px;">Mostrando 1 - 2 de 2</div>
<div class="abs" style="left:398px;top:694px;width:132px;height:31.5px;background:#fff;border:1px solid #b0b8c2;border-radius:4px"></div>
<div class="t" style="left:412.5px;top:703.36px;font-size:14px;color:#1a202c;font-weight:400;letter-spacing:-0.152px;">10 por página</div>
<svg class="abs" style="left:516px;top:707px;" width="10" height="8" viewBox="0 0 10 8" fill="none"><path d="M1.5 1.8 L5 5.3 L8.5 1.8" stroke="#1a202c" stroke-width="1.8" stroke-linecap="round" stroke-linejoin="round" fill="none"/></svg>
<div class="abs" style="left:1576px;top:694px;width:81px;height:32px;background:#e2e5ea;border-radius:4px"></div>
<div class="t" style="left:1591.9px;top:703.25px;font-size:14px;color:#ffffff;font-weight:400;letter-spacing:-0.046px;">Anterior</div>
<div class="t" style="left:1681.3px;top:703.96px;font-size:14px;color:#4a5568;font-weight:400;letter-spacing:-0.267px;">Página 1 de 1</div>
<div class="abs" style="left:1789px;top:694px;width:83px;height:32px;background:#e2e5ea;border-radius:4px"></div>
<div class="t" style="left:1805.3px;top:703.25px;font-size:14px;color:#ffffff;font-weight:400;letter-spacing:-0.158px;">Próxima</div>
</div>
</div></body></html>
